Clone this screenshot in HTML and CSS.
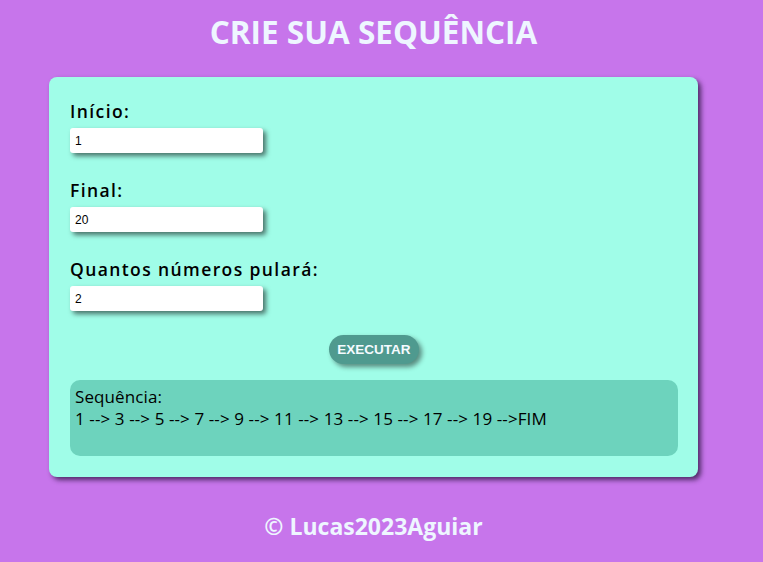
FILE: index.html
```html
<!DOCTYPE html>
<html lang="pt-BR">
<head>
<meta charset="utf-8">
<title>Crie sua sequência</title>
<link rel="stylesheet" href="styles.css">
</head>
<body>
<div class="page">
  <header class="top">
    <h1 class="title">CRIE SUA SEQUÊNCIA</h1>
  </header>
  <main class="card">
    <div class="field">
      <label class="label" for="ini">Início:</label>
      <input class="num" id="ini" type="text" value="1">
    </div>
    <div class="field">
      <label class="label" for="fim">Final:</label>
      <input class="num" id="fim" type="text" value="20">
    </div>
    <div class="field">
      <label class="label" for="passo">Quantos números pulará:</label>
      <input class="num" id="passo" type="text" value="2">
    </div>
    <div class="actions">
      <button class="btn" type="button">EXECUTAR</button>
    </div>
    <div class="result">
      <div>Sequência:</div>
      <div>1 --&gt; 3 --&gt; 5 --&gt; 7 --&gt; 9 --&gt; 11 --&gt; 13 --&gt; 15 --&gt; 17 --&gt; 19 --&gt;FIM</div>
    </div>
  </main>
  <footer class="foot">
    <p class="copy">&copy; Lucas2023Aguiar</p>
  </footer>
</div>
</body>
</html>
```
FILE: styles.css
```css
* { box-sizing: border-box; }
body {
  margin: 0;
  background: #c775eb;
  font-family: "Open Sans", "Noto Sans", sans-serif;
}
.page { width: 747px; }
.top { padding-top: 12px; }
.title {
  margin: 0;
  text-align: center;
  color: #eef6ff;
  font-size: 31.5px;
  line-height: 40px;
  font-weight: 700;
}
.card {
  width: 649px;
  margin: 25px auto 0;
  background: #a0fde8;
  border-radius: 8px;
  box-shadow: 3px 3px 5px rgba(40, 20, 60, 0.75);
  padding: 21px 20px 21px 21px;
}
.field {
  display: flex;
  flex-direction: column;
  align-items: flex-start;
  margin-bottom: 24px;
}
.label {
  font-size: 17.5px;
  font-weight: 600;
  line-height: 26px;
  letter-spacing: 1.4px;
  color: #000;
  margin-bottom: 4px;
}
.num {
  width: 193px;
  height: 25px;
  border: none;
  border-radius: 3px;
  background: #fff;
  padding: 0 5px;
  font-family: "Liberation Sans", Arial, sans-serif;
  font-size: 12px;
  color: #000;
  box-shadow: 3px 3px 5px rgba(0, 0, 0, 0.55);
  outline: none;
}
.actions {
  display: flex;
  justify-content: center;
}
.btn {
  width: 90px;
  height: 29px;
  border: none;
  border-radius: 15px;
  background: #4f9a8f;
  color: #f4fbff;
  font-family: "Liberation Sans", Arial, sans-serif;
  font-weight: 700;
  font-size: 13.5px;
  box-shadow: 3px 3px 5px rgba(0, 0, 0, 0.45);
  padding: 0;
}
.result {
  margin-top: 16px;
  background: #6dd3bd;
  border-radius: 10px;
  min-height: 76px;
  padding: 6px 5px;
  font-size: 17px;
  line-height: 22px;
  letter-spacing: 0.1px;
  color: #000;
}
.foot { text-align: center; }
.copy {
  margin: 34px 0 0;
  color: #eef6ff;
  font-weight: 700;
  font-size: 23px;
  line-height: 30px;
}
```
